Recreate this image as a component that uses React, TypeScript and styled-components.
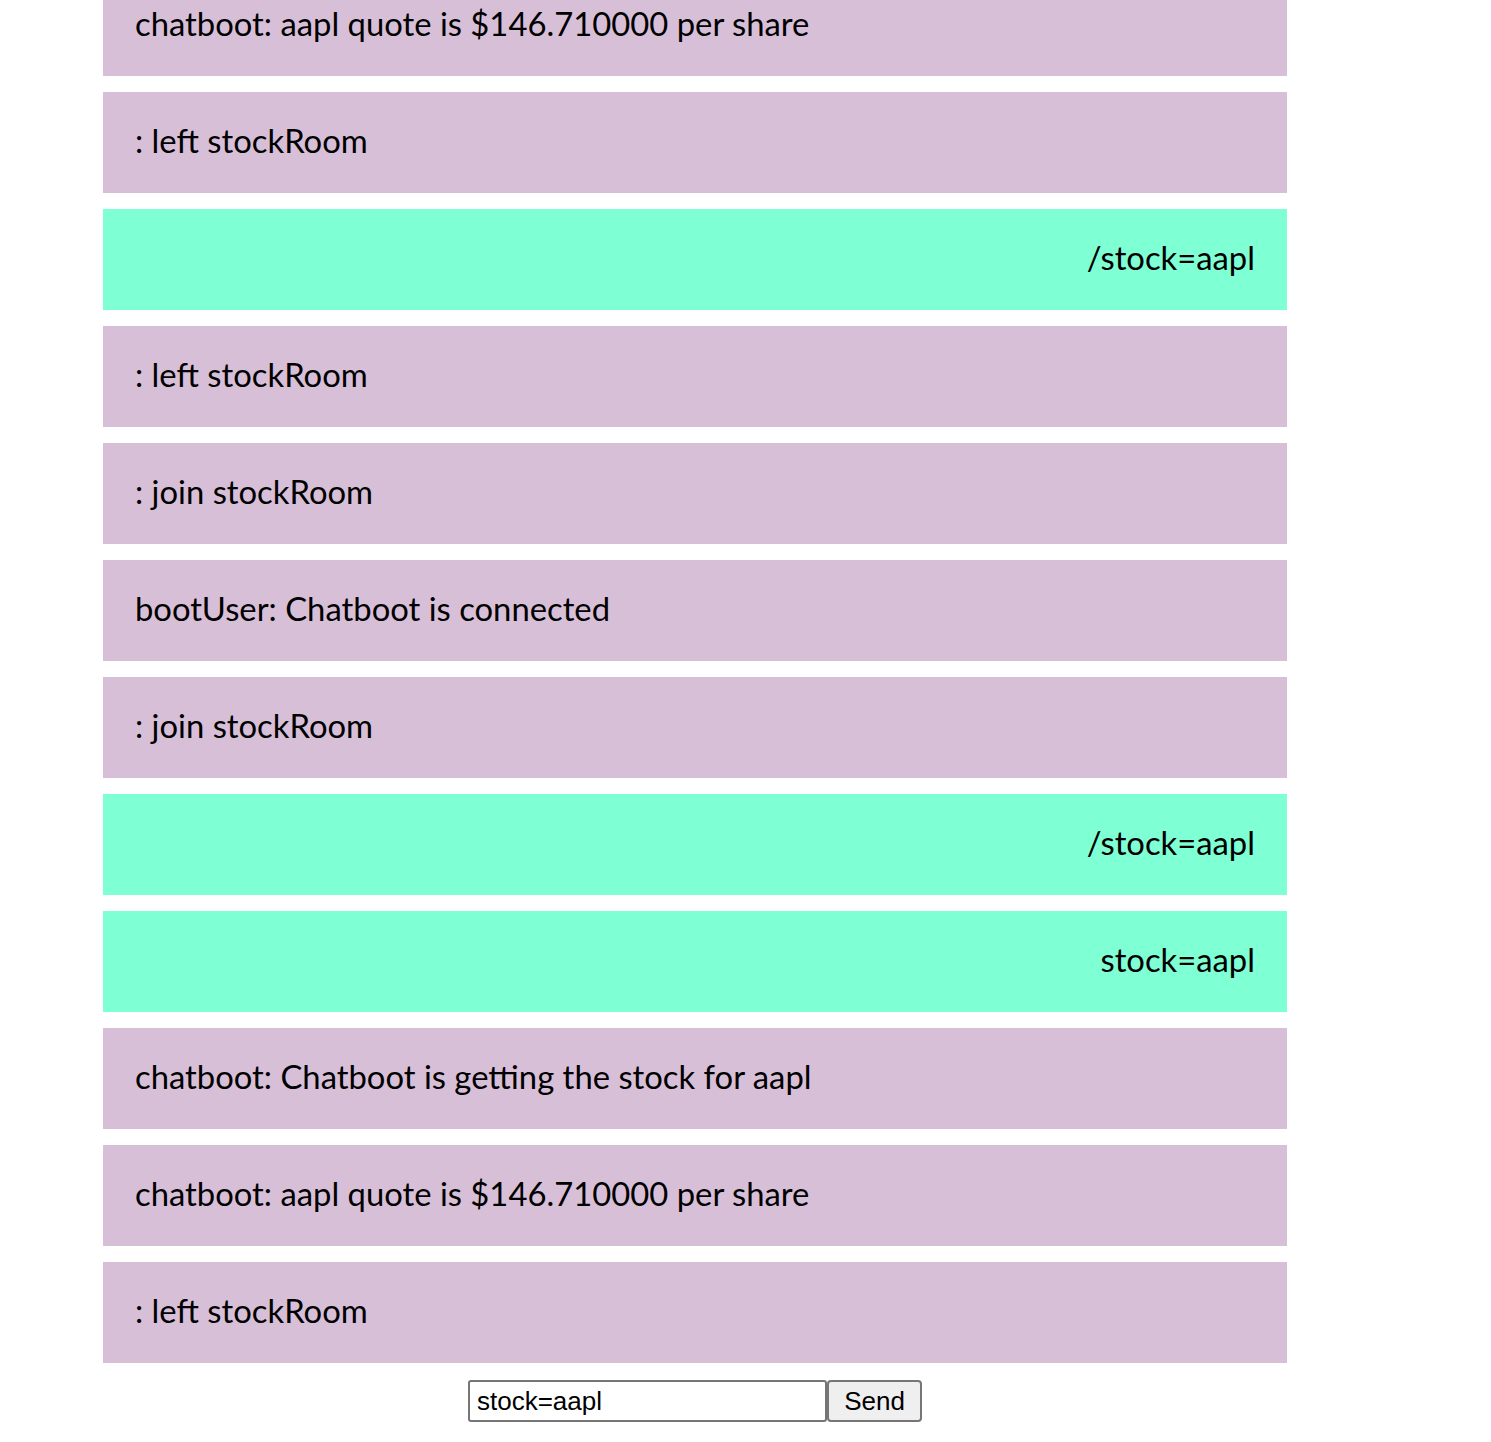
import React from "react";
import styled, { createGlobalStyle } from "styled-components";

const GlobalStyle = createGlobalStyle`
  html, body { margin: 0; padding: 0; background: #ffffff; }
  body { font-family: "Lato", "Open Sans", sans-serif; }
`;

const Page = styled.div`
  height: 1442px;
  overflow: hidden;
  display: flex;
  flex-direction: column;
  justify-content: flex-end;
  padding-left: 103px;
  box-sizing: border-box;
`;

const Chat = styled.div`
  width: 1184px;
  display: flex;
  flex-direction: column;
  padding-bottom: 20px;
`;

const MessageList = styled.ul`
  list-style: none;
  margin: 0;
  padding: 0;
  display: flex;
  flex-direction: column;
  gap: 16px;
`;

const Message = styled.li<{ $own: boolean }>`
  background: ${(p) => (p.$own ? "#7fffd4" : "#d8bfd8")};
  text-align: ${(p) => (p.$own ? "right" : "left")};
  padding: 0 32px 5px;
  height: 101px;
  box-sizing: border-box;
  display: flex;
  align-items: center;
  justify-content: ${(p) => (p.$own ? "flex-end" : "flex-start")};
  font-size: 32.8px;
  color: #000;
  white-space: nowrap;
`;

const Form = styled.form`
  margin-top: 17px;
  display: flex;
  justify-content: center;
`;

const Input = styled.input`
  width: 359px;
  height: 42px;
  box-sizing: border-box;
  font-family: "Liberation Sans", Arial, sans-serif;
  font-size: 26px;
  padding: 0 7px;
  border: 2px solid #767676;
  border-radius: 3px;
  color: #000;
  outline: none;
`;

const SendButton = styled.button`
  width: 95px;
  height: 42px;
  box-sizing: border-box;
  font-family: "Liberation Sans", Arial, sans-serif;
  font-size: 26px;
  background: #efefef;
  border: 2px solid #767676;
  border-radius: 4px;
  color: #000;
  padding: 0;
`;

const messages: { text: string; own: boolean }[] = [
  { text: "chatboot: aapl quote is $146.710000 per share", own: false },
  { text: ": left stockRoom", own: false },
  { text: "/stock=aapl", own: true },
  { text: ": left stockRoom", own: false },
  { text: ": join stockRoom", own: false },
  { text: "bootUser: Chatboot is connected", own: false },
  { text: ": join stockRoom", own: false },
  { text: "/stock=aapl", own: true },
  { text: "stock=aapl", own: true },
  { text: "chatboot: Chatboot is getting the stock for aapl", own: false },
  { text: "chatboot: aapl quote is $146.710000 per share", own: false },
  { text: ": left stockRoom", own: false },
];

export default function App() {
  return (
    <>
      <GlobalStyle />
      <Page>
        <Chat>
          <MessageList>
            {messages.map((m, i) => (
              <Message key={i} $own={m.own}>
                {m.text}
              </Message>
            ))}
          </MessageList>
          <Form onSubmit={(e) => e.preventDefault()}>
            <Input defaultValue="stock=aapl" />
            <SendButton type="submit">Send</SendButton>
          </Form>
        </Chat>
      </Page>
    </>
  );
}
